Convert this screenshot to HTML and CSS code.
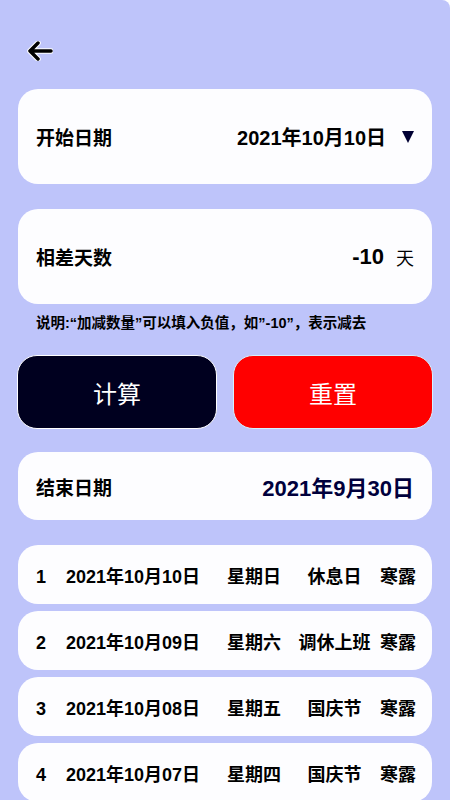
FILE: index.html
```html
<!DOCTYPE html>
<html lang="zh-CN">

<head>
    <meta charset="UTF-8">
    <meta name="viewport" content="width=device-width, initial-scale=1.0">
    <title>日期计算</title>
    <link rel="stylesheet" href="styles.css">
</head>

<body>
    <div class="page">
        <div class="back">
            <svg width="26" height="20" viewBox="0 0 26 20">
                <path d="M24 10H3M11 2L3 10l8 8" fill="none" stroke="#fff" stroke-width="5.5" stroke-linecap="round" stroke-linejoin="round" />
                <path d="M24 10H3M11 2L3 10l8 8" fill="none" stroke="#000" stroke-width="3.5" stroke-linecap="round" stroke-linejoin="round" />
            </svg>
        </div>

        <div class="card">
            <span class="label">开始日期</span>
            <span class="picker">
                <span class="value">2021年10月10日</span>
                <span class="caret"></span>
            </span>
        </div>

        <div class="card card-diff">
            <span class="label">相差天数</span>
            <span class="picker">
                <span class="value value-days">-10</span>
                <span class="unit">天</span>
            </span>
        </div>

        <p class="note">说明:“加减数量”可以填入负值，如”-10”，表示减去</p>

        <div class="buttons">
            <button class="btn btn-calc">计算</button>
            <button class="btn btn-reset">重置</button>
        </div>

        <div class="card card-end">
            <span class="label">结束日期</span>
            <span class="end-value">2021年9月30日</span>
        </div>

        <div class="list">
            <div class="row">
                <span>1</span>
                <span>2021年10月10日</span>
                <span>星期日</span>
                <span class="holiday">休息日</span>
                <span>寒露</span>
            </div>
            <div class="row">
                <span>2</span>
                <span>2021年10月09日</span>
                <span>星期六</span>
                <span class="holiday">调休上班</span>
                <span>寒露</span>
            </div>
            <div class="row">
                <span>3</span>
                <span>2021年10月08日</span>
                <span>星期五</span>
                <span class="holiday">国庆节</span>
                <span>寒露</span>
            </div>
            <div class="row">
                <span>4</span>
                <span>2021年10月07日</span>
                <span>星期四</span>
                <span class="holiday">国庆节</span>
                <span>寒露</span>
            </div>
        </div>
    </div>
</body>

</html>
```

FILE: styles.css
```css
body {
    margin: 0;
    background-color: #fff;
    font-family: "Liberation Sans", "Noto Sans CJK SC", sans-serif;
    color: #000;
}

.page {
    height: 800px;
    overflow: hidden;
    box-sizing: border-box;
    padding: 41px 18px 0;
    background-color: #bec4fa;
    border-top-right-radius: 8px;
}

.back {
    height: 20px;
    padding-left: 9px;
    margin-bottom: 28px;
}

.back svg {
    display: block;
}

.card {
    display: flex;
    align-items: center;
    justify-content: space-between;
    height: 95px;
    padding: 0 18px;
    margin-bottom: 25px;
    border-radius: 20px;
    background-color: #fdfdff;
}

.label {
    font-size: 19px;
    font-weight: bold;
}

.picker {
    display: flex;
    align-items: center;
}

.value {
    font-size: 20px;
    font-weight: bold;
}

.value-days {
    font-size: 22px;
}

.caret {
    width: 0;
    height: 0;
    margin-left: 16px;
    border-left: 6.5px solid transparent;
    border-right: 6.5px solid transparent;
    border-top: 12px solid #000033;
}

.unit {
    margin-left: 12px;
    font-size: 18px;
}

.card-diff {
    margin-bottom: 0;
}

.note {
    margin: 9px 0 0 18px;
    font-size: 14.5px;
    font-weight: bold;
    line-height: 20px;
}

.buttons {
    display: flex;
    gap: 16px;
    margin: 22px -1px 23px;
}

.btn {
    flex: 1;
    height: 74px;
    border-radius: 20px;
    font-family: inherit;
    font-size: 24px;
    color: #fff;
    cursor: pointer;
}

.btn-calc {
    background-color: #00001f;
    border: 1px solid #fff;
}

.btn-reset {
    background-color: #ff0000;
    border: 1px solid #d6f2ff;
}

.card-end {
    height: 68px;
}

.end-value {
    font-size: 22px;
    font-weight: bold;
    color: #00003c;
}

.list {
    display: flex;
    flex-direction: column;
    gap: 7px;
}

.row {
    display: grid;
    grid-template-columns: 30px 161px 62px 1fr auto;
    align-items: baseline;
    align-content: center;
    height: 59px;
    padding: 0 16px 0 18px;
    border-radius: 20px;
    background-color: #fdfdff;
    font-size: 18px;
    font-weight: bold;
    white-space: nowrap;
}

.holiday {
    text-align: center;
}
```
